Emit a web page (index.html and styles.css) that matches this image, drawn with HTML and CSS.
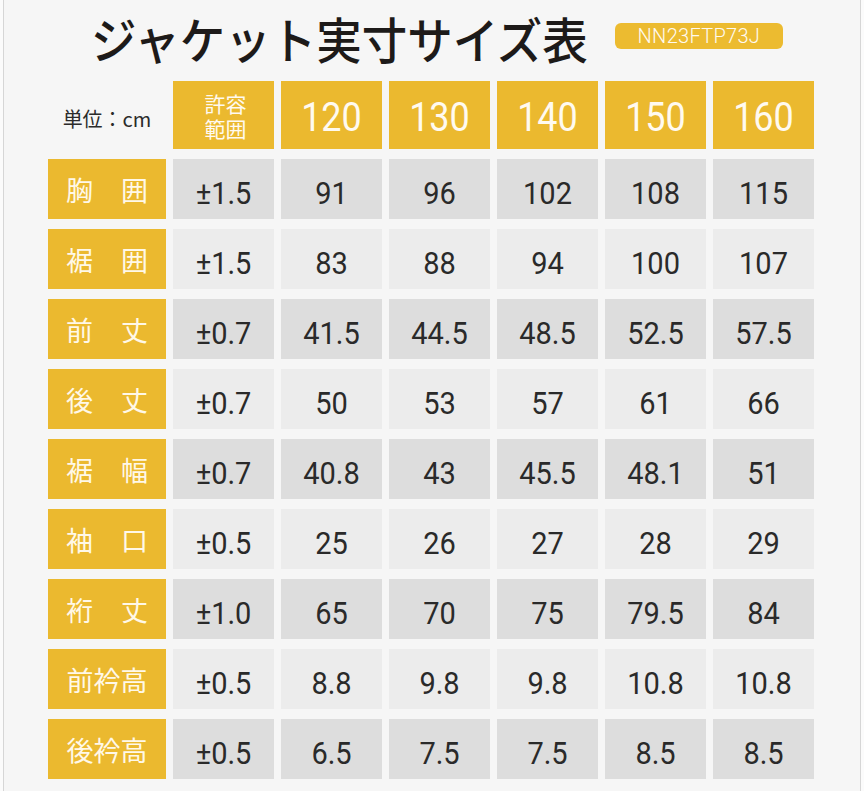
FILE: index.html
```html
<!DOCTYPE html>
<html lang="ja">
<head>
<meta charset="utf-8">
<title>ジャケット実寸サイズ表</title>
<link rel="stylesheet" href="styles.css">
</head>
<body>
<div class="page">
  <header class="head">
    <h1 class="title"><span class="tt">ジャケット実寸サイズ表</span></h1>
    <div class="badge">NN23FTP73J</div>
  </header>
  <div class="grid">
    <div class="unit">単位：cm</div>
    <div class="hcell tol"><span>許容</span><span>範囲</span></div>
    <div class="hcell num"><span class="hn">120</span></div>
    <div class="hcell num"><span class="hn">130</span></div>
    <div class="hcell num"><span class="hn">140</span></div>
    <div class="hcell num"><span class="hn">150</span></div>
    <div class="hcell num"><span class="hn">160</span></div>

    <div class="lab two"><span>胸</span><span>囲</span></div>
    <div class="c d"><span class="v">±1.5</span></div><div class="c d"><span class="v">91</span></div><div class="c d"><span class="v">96</span></div><div class="c d"><span class="v">102</span></div><div class="c d"><span class="v">108</span></div><div class="c d"><span class="v">115</span></div>

    <div class="lab two"><span>裾</span><span>囲</span></div>
    <div class="c l"><span class="v">±1.5</span></div><div class="c l"><span class="v">83</span></div><div class="c l"><span class="v">88</span></div><div class="c l"><span class="v">94</span></div><div class="c l"><span class="v">100</span></div><div class="c l"><span class="v">107</span></div>

    <div class="lab two"><span>前</span><span>丈</span></div>
    <div class="c d"><span class="v">±0.7</span></div><div class="c d"><span class="v">41.5</span></div><div class="c d"><span class="v">44.5</span></div><div class="c d"><span class="v">48.5</span></div><div class="c d"><span class="v">52.5</span></div><div class="c d"><span class="v">57.5</span></div>

    <div class="lab two"><span>後</span><span>丈</span></div>
    <div class="c l"><span class="v">±0.7</span></div><div class="c l"><span class="v">50</span></div><div class="c l"><span class="v">53</span></div><div class="c l"><span class="v">57</span></div><div class="c l"><span class="v">61</span></div><div class="c l"><span class="v">66</span></div>

    <div class="lab two"><span>裾</span><span>幅</span></div>
    <div class="c d"><span class="v">±0.7</span></div><div class="c d"><span class="v">40.8</span></div><div class="c d"><span class="v">43</span></div><div class="c d"><span class="v">45.5</span></div><div class="c d"><span class="v">48.1</span></div><div class="c d"><span class="v">51</span></div>

    <div class="lab two"><span>袖</span><span>口</span></div>
    <div class="c l"><span class="v">±0.5</span></div><div class="c l"><span class="v">25</span></div><div class="c l"><span class="v">26</span></div><div class="c l"><span class="v">27</span></div><div class="c l"><span class="v">28</span></div><div class="c l"><span class="v">29</span></div>

    <div class="lab two"><span>裄</span><span>丈</span></div>
    <div class="c d"><span class="v">±1.0</span></div><div class="c d"><span class="v">65</span></div><div class="c d"><span class="v">70</span></div><div class="c d"><span class="v">75</span></div><div class="c d"><span class="v">79.5</span></div><div class="c d"><span class="v">84</span></div>

    <div class="lab"><span>前衿高</span></div>
    <div class="c l"><span class="v">±0.5</span></div><div class="c l"><span class="v">8.8</span></div><div class="c l"><span class="v">9.8</span></div><div class="c l"><span class="v">9.8</span></div><div class="c l"><span class="v">10.8</span></div><div class="c l"><span class="v">10.8</span></div>

    <div class="lab"><span>後衿高</span></div>
    <div class="c d"><span class="v">±0.5</span></div><div class="c d"><span class="v">6.5</span></div><div class="c d"><span class="v">7.5</span></div><div class="c d"><span class="v">7.5</span></div><div class="c d"><span class="v">8.5</span></div><div class="c d"><span class="v">8.5</span></div>
  </div>
</div>
</body>
</html>
```

FILE: styles.css
```css
html, body {
  margin: 0;
  padding: 0;
  background: #fbfbfb;
}
body {
  width: 864px;
  height: 791px;
  overflow: hidden;
}
.page {
  box-sizing: border-box;
  margin: 0 3px;
  height: 791px;
  border-left: 1px solid #d6d6d6;
  border-right: 1px solid #d6d6d6;
  background: #f6f6f6;
  padding-left: 44px;
}
.head {
  display: flex;
  align-items: center;
  height: 81px;
  padding-left: 43px;
  box-sizing: border-box;
  padding-bottom: 6px;
}
.title {
  margin: 0;
  font-family: "Noto Sans CJK JP", sans-serif;
  font-weight: 500;
  font-size: 45.5px;
  line-height: 1;
  color: #1d1a19;
  letter-spacing: 0;
}
.tt {
  display: inline-block;
  transform: scaleY(1.08);
}
.badge {
  margin-left: 27px;
  margin-top: -4px;
  width: 168px;
  height: 26px;
  border-radius: 6px;
  background: #ecbb30;
  color: #fffaf0;
  font-family: Roboto, "Liberation Sans", sans-serif;
  font-weight: 300;
  font-size: 20px;
  line-height: 26px;
  text-align: center;
  letter-spacing: 0.3px;
}
.grid {
  display: grid;
  grid-template-columns: 118px repeat(6, 101px);
  grid-template-rows: 68px repeat(9, 60px);
  column-gap: 7px;
  row-gap: 10px;
}
.unit {
  display: flex;
  align-items: center;
  justify-content: center;
  padding-top: 6px;
  font-family: "Noto Sans CJK JP", sans-serif;
  font-size: 20px;
  color: #2b2b2b;
}
.hcell {
  background: #ebb92f;
  color: #fffaf0;
  display: flex;
  align-items: center;
  justify-content: center;
}
.tol {
  flex-direction: column;
  font-family: "Noto Sans CJK JP", sans-serif;
  font-size: 21px;
  line-height: 25px;
  padding-top: 2px;
  padding-left: 4px;
}
.num {
  font-family: Roboto, "Liberation Sans", sans-serif;
  font-size: 36px;
  padding-top: 6px;
}
.hn {
  display: inline-block;
  transform: scaleY(1.12);
}
.lab {
  background: #ebb92f;
  color: #fff8e8;
  display: flex;
  align-items: center;
  justify-content: center;
  font-family: "Noto Sans CJK JP", sans-serif;
  font-size: 27px;
}
.lab.two {
  gap: 28px;
}
.c {
  display: flex;
  align-items: center;
  justify-content: center;
  font-family: Roboto, "Liberation Sans", sans-serif;
  font-size: 29px;
  color: #2a2a2a;
  padding-top: 7px;
  box-sizing: border-box;
}
.c.d {
  background: #dddddd;
}
.c.l {
  background: #ececec;
}
.v {
  display: inline-block;
  transform: scaleY(1.08);
}
```
